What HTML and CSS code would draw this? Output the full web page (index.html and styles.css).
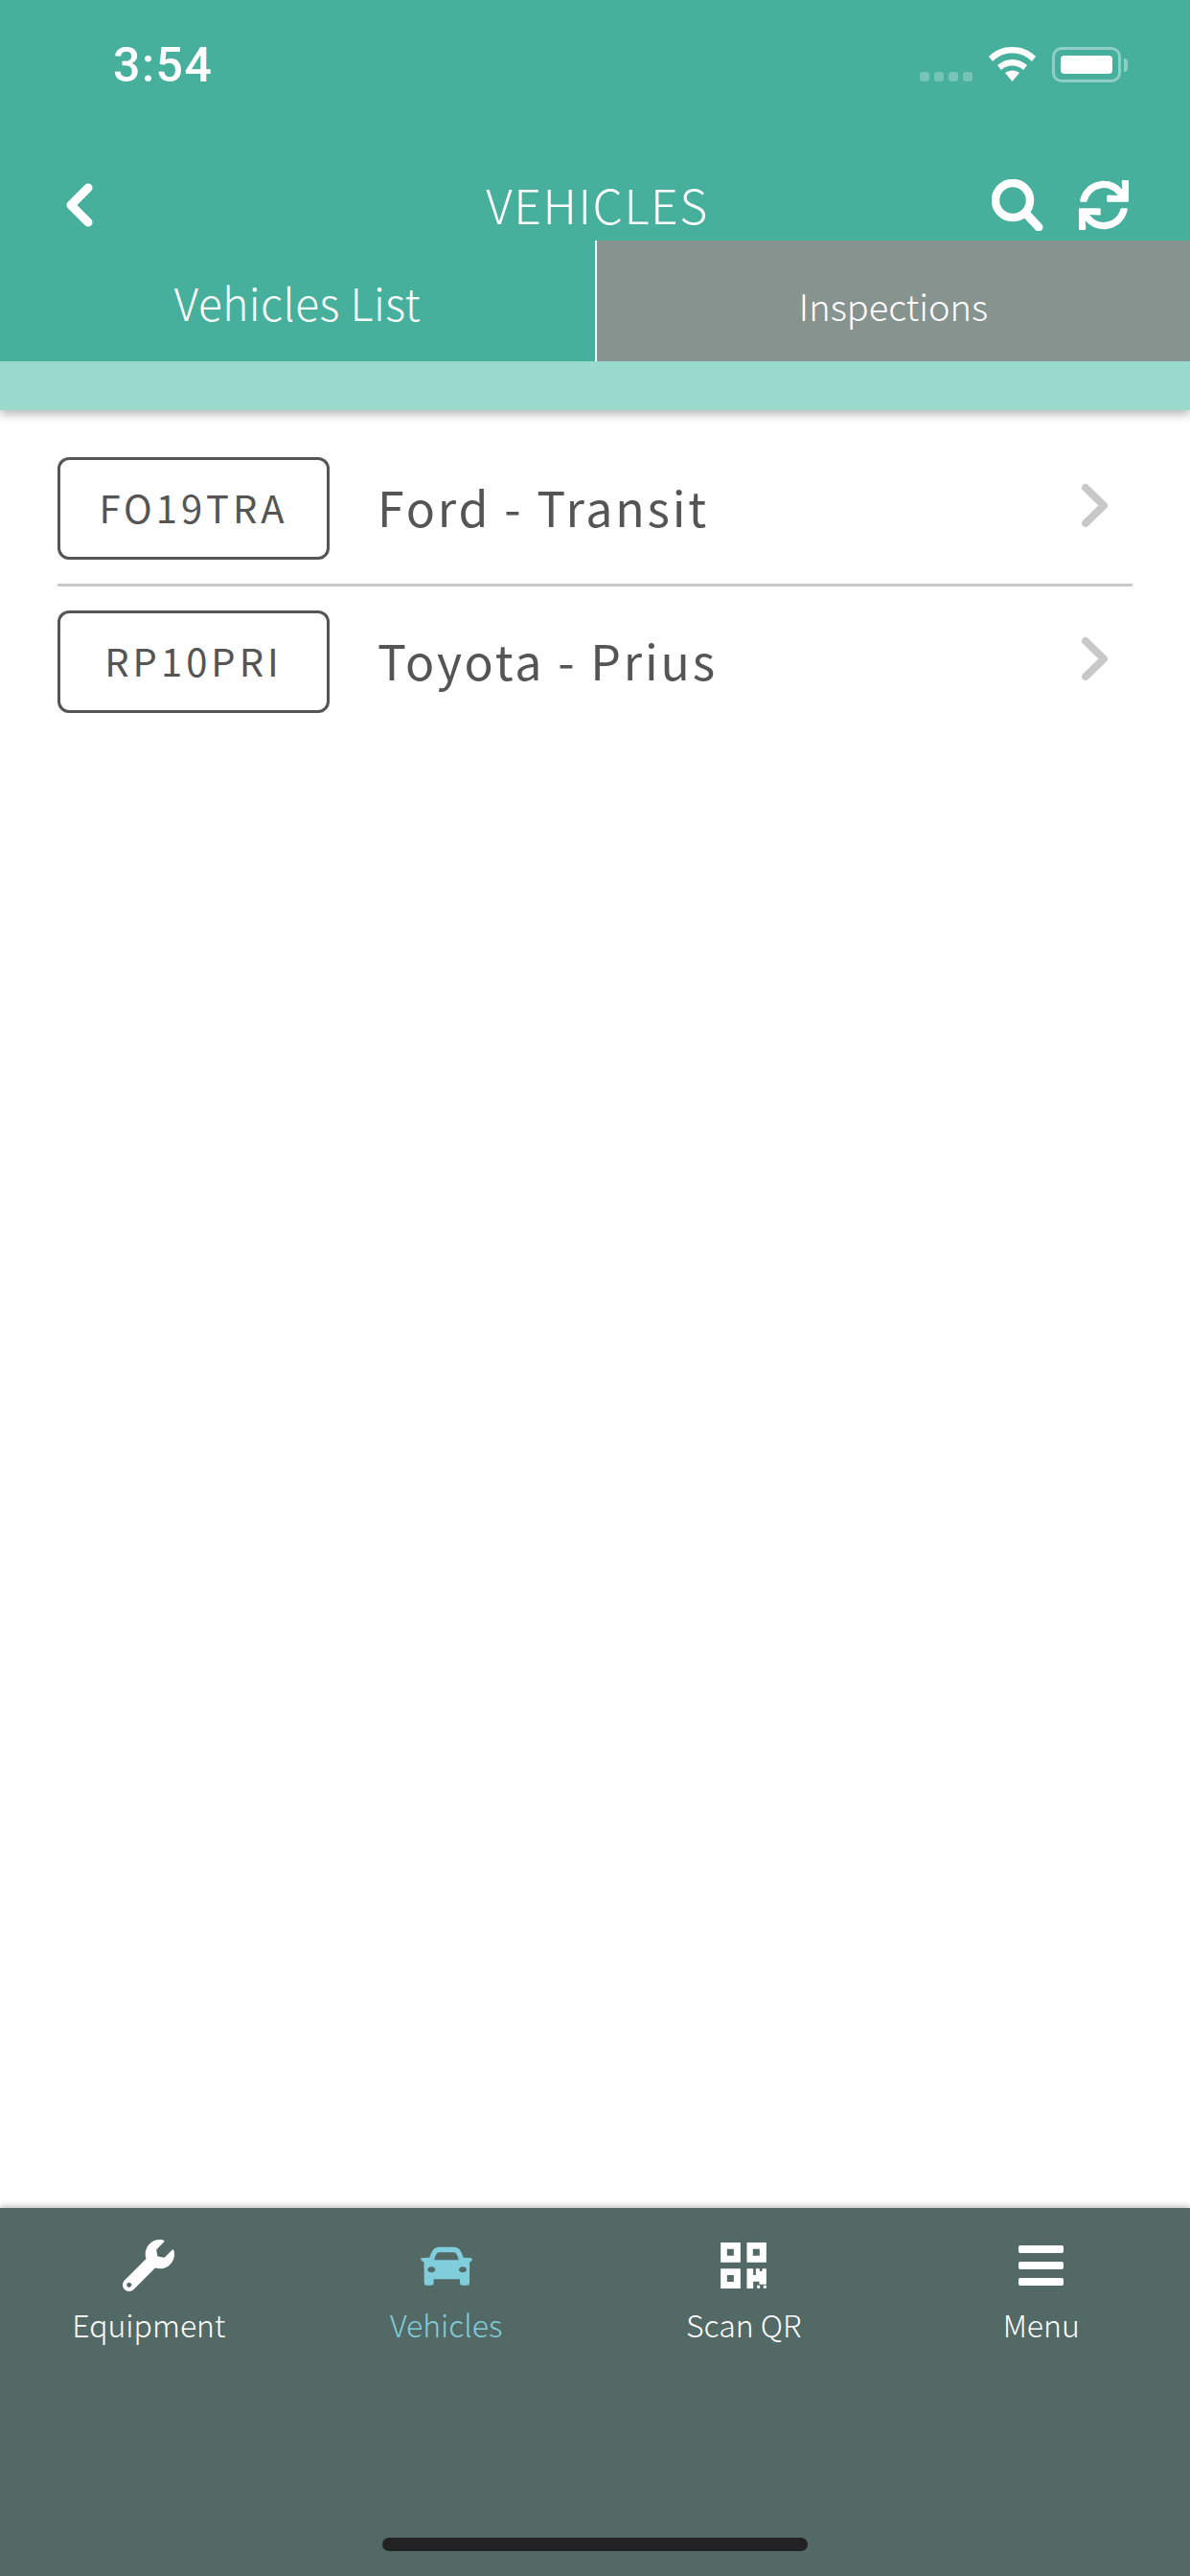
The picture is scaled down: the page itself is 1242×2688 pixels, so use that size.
FILE: index.html
```html
<!DOCTYPE html>
<html lang="en">
<head>
    <meta charset="UTF-8">
    <meta name="viewport" content="width=device-width, initial-scale=1.0">
    <title>Vehicles</title>
    <link rel="stylesheet" href="styles.css">
</head>
<body>
    <header class="top">
        <div class="status">
            <span class="time">3:54</span>
            <div class="status-icons">
                <div class="signal"><i></i><i></i><i></i><i></i></div>
                <svg class="wifi" viewBox="0 0 49 36">
                    <path d="M0 10C7 3 15 0 24.500 0S42 3 49 10l-4 5C39 9 32 6.500 24.500 6.500S10 9 4 15z" fill="#fff"/>
                    <path d="M9 19c4.500-4 10-6 15.500-6S35.500 15 40 19l-4 5c-3-3-7-4.500-11.500-4.500S16 21 13 24z" fill="#fff"/>
                    <path d="M17 27c2-1.500 5-2.500 7.500-2.500S30 25.500 32 27l-7.500 9z" fill="#fff"/>
                </svg>
                <div class="battery"><div class="battery-fill"></div></div>
                <div class="battery-nub"></div>
            </div>
        </div>
        <div class="navbar">
            <div class="nav-left">
                <svg class="back" viewBox="0 0 28 46"><path d="M23 5L5 23l18 18" fill="none" stroke="#fff" stroke-width="9" stroke-linecap="round" stroke-linejoin="round"/></svg>
            </div>
            <h1 class="title">VEHICLES</h1>
            <div class="nav-right">
                <svg class="search" viewBox="0 0 54 54">
                    <circle cx="22" cy="22" r="18" fill="none" stroke="#fff" stroke-width="8.500"/>
                    <path d="M35 35l14 15" fill="none" stroke="#fff" stroke-width="9" stroke-linecap="round"/>
                </svg>
                <svg class="refresh" viewBox="0 0 512 512"><path fill="#fff" d="M440.650 12.570l4 82.770A247.160 247.160 0 0 0 255.830 8C134.730 8 33.910 94.920 12.290 209.820A12 12 0 0 0 24.090 224h49.050a12 12 0 0 0 11.670-9.260 175.910 175.910 0 0 1 317-56.940l-101.460-4.860a12 12 0 0 0-12.570 12v47.410a12 12 0 0 0 12 12H500a12 12 0 0 0 12-12V12a12 12 0 0 0-12-12h-47.370a12 12 0 0 0-11.980 12.570zM255.830 432a175.610 175.610 0 0 1-146-77.800l101.800 4.870a12 12 0 0 0 12.570-12v-47.400a12 12 0 0 0-12-12H12a12 12 0 0 0-12 12V500a12 12 0 0 0 12 12h47.350a12 12 0 0 0 12-12.600l-4.150-82.570A247.170 247.170 0 0 0 255.830 504c121.110 0 221.930-86.920 243.550-201.820a12 12 0 0 0-11.800-14.180h-49.050a12 12 0 0 0-11.670 9.260A175.860 175.860 0 0 1 255.830 432z"/></svg>
            </div>
        </div>
        <div class="tabs">
            <div class="tab tab-active">Vehicles List</div>
            <div class="tab tab-idle">Inspections</div>
        </div>
        <div class="strip"></div>
    </header>

    <main class="list">
        <div class="row">
            <div class="plate">FO19TRA</div>
            <div class="name">Ford - Transit</div>
            <svg class="chevron" viewBox="0 0 31 47"><path d="M6 5l19 18.500L6 42" fill="none" stroke="#c8c8c8" stroke-width="8" stroke-linecap="round" stroke-linejoin="round"/></svg>
        </div>
        <div class="row">
            <div class="plate">RP10PRI</div>
            <div class="name">Toyota - Prius</div>
            <svg class="chevron" viewBox="0 0 31 47"><path d="M6 5l19 18.500L6 42" fill="none" stroke="#c8c8c8" stroke-width="8" stroke-linecap="round" stroke-linejoin="round"/></svg>
        </div>
    </main>

    <footer class="bottom">
        <nav class="bottom-tabs">
            <div class="bottom-tab">
                <div class="bottom-icon">
                    <svg class="icon-wrench" viewBox="0 0 512 512"><path fill="#fff" d="M507.730 109.100c-2.240-9.030-13.540-12.090-20.120-5.510l-74.360 74.360-67.880-11.310-11.310-67.880 74.360-74.360c6.620-6.620 3.430-17.900-5.660-20.160-47.380-11.740-99.550.91-136.580 37.930-39.640 39.640-50.550 97.100-34.050 147.200L18.740 402.760c-24.990 24.990-24.990 65.510 0 90.500 24.990 24.990 65.510 24.990 90.500 0l213.210-213.210c50.120 16.710 107.470 5.680 147.370-34.220 37.070-37.070 49.700-89.320 37.910-136.730zM64 472c-13.250 0-24-10.750-24-24 0-13.260 10.750-24 24-24s24 10.740 24 24c0 13.250-10.750 24-24 24z"/></svg>
                </div>
                <span>Equipment</span>
            </div>
            <div class="bottom-tab bottom-tab-active">
                <div class="bottom-icon">
                    <svg class="icon-car" viewBox="113 70 162 122"><path fill="#80cddb" fill-rule="evenodd" d="M170 72H218C232 72 240 82 247 105L272 106L275 112L265 122C268 130 266 135 266 145V182C266 190 262 192 255 192H245C238 192 236 188 236 182V172H154V182C154 188 152 192 145 192H133C126 192 124 188 124 182V145C124 135 122 130 125 122L115 112L113 106L141 105C148 82 156 72 170 72ZM172 88C164 88 160 95 156 112H232C228 95 224 88 216 88ZM147 133C140 133 135 137 135 142C135 148 141 151 147 151C154 151 159 148 159 142C159 137 154 133 147 133ZM245 133C238 133 233 137 233 142C233 148 238 151 245 151C251 151 257 148 257 142C257 137 252 133 245 133Z"/></svg>
                </div>
                <span>Vehicles</span>
            </div>
            <div class="bottom-tab">
                <div class="bottom-icon">
                    <svg class="icon-qr" viewBox="158 60 143 144"><path fill="#fff" fill-rule="evenodd" d="M158 60h62v62h-62zM178 80v21h21V80zM240 60h61v62h-61zM259 80v21h21V80zM158 142h62v62h-62zM178 162v21h21v-21zM240 142h20v20h8v-20h12v8h8v-8h13v49h-22v-9h-19v22h-20zM272 194h9v9h-9zM292 194h9v9h-9z"/></svg>
                </div>
                <span>Scan QR</span>
            </div>
            <div class="bottom-tab">
                <div class="bottom-icon">
                    <div class="icon-menu"><i></i><i></i><i></i></div>
                </div>
                <span>Menu</span>
            </div>
        </nav>
        <div class="home-bar"></div>
    </footer>
</body>
</html>
```

FILE: styles.css
```css
* {
    margin: 0;
    padding: 0;
    box-sizing: border-box;
}

body {
    font-family: 'Noto Sans CJK JP', 'Noto Sans', sans-serif;
    height: 100vh;
    background: white;
    display: flex;
    flex-direction: column;
    overflow: hidden;
}

.top {
    background: #47b09d;
    color: white;
    box-shadow: 0 4px 10px rgba(0,0,0,0.3);
}

.status {
    height: 176px;
    display: flex;
    justify-content: space-between;
    align-items: flex-start;
    padding: 49px 65px 0 118px;
}

.time {
    font-family: 'Roboto', sans-serif;
    font-size: 50px;
    font-weight: 500;
    line-height: 38px;
    letter-spacing: 1.500px;
}

.status-icons {
    display: flex;
    align-items: flex-start;
}

.signal {
    display: flex;
    gap: 5px;
    margin: 26px 17px 0 0;
}

.signal i {
    width: 10px;
    height: 10px;
    border-radius: 3px;
    background: rgba(255,255,255,0.25);
}

.wifi {
    width: 49px;
    height: 36px;
    margin-right: 17px;
}

.battery {
    width: 72px;
    height: 37px;
    padding: 6px;
    border: 3px solid rgba(255,255,255,0.4);
    border-radius: 10px;
}

.battery-fill {
    height: 100%;
    background: white;
    border-radius: 4px;
}

.battery-nub {
    width: 4px;
    height: 14px;
    margin: 12px 0 0 3px;
    background: rgba(255,255,255,0.4);
    border-radius: 0 4px 4px 0;
}

.navbar {
    height: 75px;
    display: grid;
    grid-template-columns: 1fr auto 1fr;
    align-items: center;
    padding: 0 64px 0 69px;
}

.back {
    display: block;
    width: 28px;
    height: 46px;
}

.title {
    font-size: 50px;
    font-weight: 300;
    letter-spacing: 1.500px;
    padding-bottom: 3px;
}

.nav-right {
    display: flex;
    justify-content: flex-end;
    align-items: center;
    gap: 37px;
}

.search {
    width: 54px;
    height: 54px;
}

.refresh {
    width: 52px;
    height: 52px;
}

.tabs {
    height: 126px;
    display: flex;
}

.tab {
    display: flex;
    align-items: center;
    justify-content: center;
    font-weight: 300;
}

.tab-active {
    width: 621px;
    font-size: 46px;
    letter-spacing: 0.500px;
    padding-top: 2px;
}

.tab-idle {
    flex: 1;
    font-size: 38px;
    background: #87938f;
    border-left: 2px solid white;
    padding-top: 8px;
}

.strip {
    height: 51px;
    background: #9adacc;
}

.list {
    flex: 1;
    padding: 24px 60px 0;
}

.row {
    display: flex;
    align-items: center;
    padding: 25px 24px 25px 0;
    border-bottom: 3px solid #c8c8c8;
}

.row:last-child {
    border-bottom: none;
}

.plate {
    width: 284px;
    height: 107px;
    padding-bottom: 3px;
    display: flex;
    align-items: center;
    justify-content: center;
    border: 3px solid #555;
    border-radius: 12px;
    font-size: 40px;
    letter-spacing: 4px;
    color: #555;
}

.name {
    flex: 1;
    margin-left: 50px;
    padding-bottom: 6px;
    font-size: 50px;
    letter-spacing: 2.800px;
    color: #555;
}

.chevron {
    width: 31px;
    height: 47px;
    margin-bottom: 6px;
}

.bottom {
    height: 384px;
    display: flex;
    flex-direction: column;
    justify-content: space-between;
    align-items: center;
    padding-bottom: 26px;
    background: #536966;
    box-shadow: 0 -2px 6px rgba(0,0,0,0.25);
}

.bottom-tabs {
    width: 100%;
    display: grid;
    grid-template-columns: repeat(4, 1fr);
    padding-top: 32px;
}

.bottom-tab {
    display: flex;
    flex-direction: column;
    align-items: center;
    font-size: 32px;
    font-weight: 300;
    color: white;
}

.bottom-tab-active {
    color: #80cddb;
}

.bottom-icon {
    height: 56px;
    margin-bottom: 10px;
    display: flex;
    align-items: center;
}

.icon-wrench {
    width: 54px;
    height: 54px;
}

.icon-car {
    width: 54px;
    height: 41px;
}

.icon-qr {
    width: 48px;
    height: 48px;
}

.icon-menu {
    width: 47px;
    display: flex;
    flex-direction: column;
    gap: 9px;
}

.icon-menu i {
    height: 8px;
    border-radius: 2px;
    background: white;
}

.home-bar {
    width: 444px;
    height: 14px;
    border-radius: 7px;
    background: #222;
}
```
